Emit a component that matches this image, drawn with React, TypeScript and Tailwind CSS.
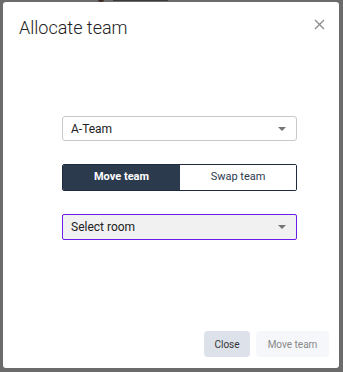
import React from "react";

function Caret() {
  return (
    <svg width="8" height="4" viewBox="0 0 8 4" className="shrink-0">
      <path d="M0 0 L8 0 L4 4 Z" fill="#757575" />
    </svg>
  );
}

export default function App() {
  return (
    <div
      className="relative w-[343px] h-[372px] bg-[#6b6b6b] overflow-hidden pt-[2px] pl-[3px]"
      style={{ fontFamily: "Roboto, 'Liberation Sans', sans-serif" }}
    >
      <div className="absolute left-[98px] top-[-3px] w-[6px] h-[5px] rounded-full bg-[#3a2a20]" />
      <div className="absolute left-[113px] top-0 w-[55px] h-[1px] bg-[#3a3a3a]" />
      <div className="relative w-[336px] h-[366px] bg-white rounded-[3px] flex flex-col">
        <div className="flex items-start justify-between pl-[16px] pr-[14px] pt-[13px]">
          <h1 className="text-[18px] text-[#222] font-light leading-[26px]">Allocate team</h1>
          <button className="mt-[4px] text-[#8a8a8a]">
            <svg width="11" height="11" viewBox="0 0 11 11">
              <path d="M1 1 L10 10 M10 1 L1 10" stroke="#8a8a8a" strokeWidth="1.3" />
            </svg>
          </button>
        </div>
        <div className="flex flex-col ml-[59px] w-[235px] mt-[75px]">
          <div className="h-[25px] border border-[#c8c8c8] rounded-[3px] flex items-center justify-between pl-[8px] pr-[10px]">
            <span className="text-[12px] text-[#222]">A-Team</span>
            <Caret />
          </div>
          <div className="mt-[23px] h-[27px] border border-[#1e2b3c] rounded-[2px] flex overflow-hidden">
            <div className="w-[117px] bg-[#2c3a4e] text-white font-bold text-[11px] flex items-center justify-center">
              Move team
            </div>
            <div className="flex-1 bg-white text-[#2c3a4e] text-[11px] flex items-center justify-center">
              Swap team
            </div>
          </div>
          <div className="mt-[23px] h-[26px] border border-[#6a1ce8] bg-[#f1f1f1] rounded-[2px] flex items-center justify-between pl-[8px] pr-[10px]">
            <span className="text-[12px] text-[#222]">Select room</span>
            <Caret />
          </div>
        </div>
        <div className="mt-auto flex justify-end gap-[6px] pr-[10px] pb-[11px]">
          <button className="w-[46px] h-[26px] rounded-[4px] bg-[#dde2ea] text-[#333] text-[10px]">Close</button>
          <button className="w-[73px] h-[26px] rounded-[4px] bg-[#f5f7fa] text-[#888] text-[10px]">Move team</button>
        </div>
      </div>
    </div>
  );
}
